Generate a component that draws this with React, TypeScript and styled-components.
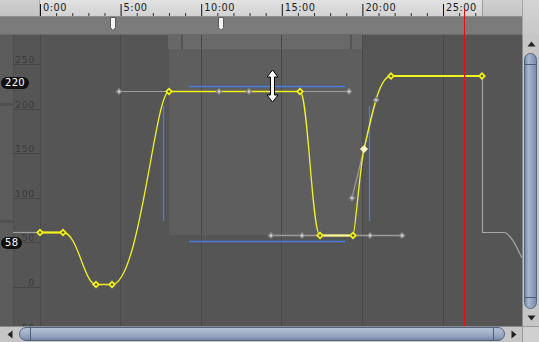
import React from "react";
import styled, { createGlobalStyle } from "styled-components";

const GlobalStyle = createGlobalStyle`
  html, body { margin: 0; padding: 0; background: #555555; overflow: hidden; }
  body { font-family: "DejaVu Sans", "Liberation Sans", sans-serif; }
`;

const Editor = styled.div`
  position: relative;
  width: 539px;
  height: 342px;
  display: grid;
  grid-template-columns: 522px 17px;
  grid-template-rows: 17px 18px 291px 16px;
  overflow: hidden;
  background: #555555;
`;

const RulerBar = styled.div`
  grid-column: 1;
  grid-row: 1;
  display: flex;
  border-bottom: 1px solid #8c8c8c;
  box-sizing: border-box;
`;

const RulerLead = styled.div`
  width: 40px;
  background: linear-gradient(#d0d0d0, #c2c2c2);
  border-right: 1px solid #a8a8a8;
  box-sizing: border-box;
`;

const RulerTrack = styled.svg`
  display: block;
  width: 442px;
  height: 16px;
  background: linear-gradient(#e2e2e2, #d2d2d2);
`;

const RulerTail = styled.div`
  flex: 1;
  background: linear-gradient(#d0d0d0, #c4c4c4);
  border-left: 1px solid #9c9c9c;
`;

const RightHeader = styled.div`
  grid-column: 2;
  grid-row: 1 / span 2;
  background: linear-gradient(#d4d4d4, #c8c8c8);
  border-left: 1px solid #a4a4a4;
`;

const EventStrip = styled.div`
  grid-column: 1;
  grid-row: 2;
  position: relative;
  background: #7b7b7b;
  border-bottom: 1px solid #6a6a6a;
  box-sizing: border-box;
`;

const EventMarker = styled.svg<{ $x: number }>`
  position: absolute;
  top: 0;
  left: ${(p) => p.$x}px;
  width: 6px;
  height: 14px;
`;

const GraphSvg = styled.svg`
  grid-column: 1;
  grid-row: 3;
  display: block;
  width: 522px;
  height: 291px;
`;

const VScroll = styled.div`
  grid-column: 2;
  grid-row: 3;
  display: flex;
  flex-direction: column;
  background: #c6c6c6;
  border-left: 1px solid #8a8a8a;
  box-sizing: border-box;
`;

const ArrowButton = styled.div<{ $h: number }>`
  height: ${(p) => p.$h}px;
  display: flex;
  align-items: center;
  justify-content: center;
  flex: none;
`;

const VTrack = styled.div`
  flex: 1;
  display: flex;
  padding: 0 2px 0 1px;
`;

const VThumb = styled.div`
  flex: 1;
  position: relative;
  border: 1px solid #53647f;
  border-radius: 7px;
  background: linear-gradient(90deg, #7487a6 0%, #a9b7cd 30%, #95a5c0 60%, #7a8cac 100%);
  &::before, &::after {
    content: "";
    position: absolute;
    left: 0;
    right: 0;
    height: 1px;
    background: #4d5d78;
  }
  &::before { top: 10px; }
  &::after { bottom: 10px; }
`;

const HScroll = styled.div`
  grid-column: 1;
  grid-row: 4;
  display: flex;
  background: #c6c6c6;
  border-top: 1px solid #8a8a8a;
  box-sizing: border-box;
`;

const HButton = styled.div<{ $w: number }>`
  width: ${(p) => p.$w}px;
  display: flex;
  align-items: center;
  justify-content: center;
  flex: none;
`;

const HTrack = styled.div`
  flex: 1;
  display: flex;
  padding: 0 0 1px 0;
`;

const HThumb = styled.div`
  flex: 1;
  position: relative;
  border: 1px solid #53647f;
  border-radius: 7px;
  background: linear-gradient(#b3c0d4 0%, #a4b2c9 40%, #8e9ebb 75%, #7385a5 100%);
  &::before, &::after {
    content: "";
    position: absolute;
    top: 0;
    bottom: 0;
    width: 1px;
    background: #4d5d78;
  }
  &::before { left: 10px; }
  &::after { right: 10px; }
`;

const Corner = styled.div`
  grid-column: 2;
  grid-row: 4;
  background: #d0d0d0;
  border-left: 1px solid #9a9a9a;
  border-top: 1px solid #9a9a9a;
`;

const Playhead = styled.div`
  position: absolute;
  left: 464px;
  top: 9px;
  width: 1px;
  height: 317px;
  background: #e41010;
  pointer-events: none;
`;

const ValueBadge = styled.div<{ $top: number }>`
  position: absolute;
  left: 1px;
  top: ${(p) => p.$top}px;
  height: 12px;
  padding: 0 4px;
  border-radius: 6px;
  background: #101010;
  color: #ffffff;
  font-family: "DejaVu Sans", sans-serif;
  font-size: 10px;
  line-height: 12px;
  letter-spacing: 0.3px;
`;

const CursorIcon = styled.svg`
  position: absolute;
  left: 265px;
  top: 69px;
  width: 15px;
  height: 34px;
  pointer-events: none;
`;

const T0 = 40.5;
const MAJOR = 80.6;
const majors = [0, 1, 2, 3, 4, 5].map((k) => ({ x: T0 + MAJOR * k, label: `${k * 5}:00` }));
const minors = Array.from({ length: 28 }, (_, i) => i)
  .filter((i) => i % 5 !== 0)
  .map((i) => T0 + (MAJOR / 5) * i);

const gridXs = [40.5, 120.5, 201.5, 281.5, 362.5, 443.5];
const valueLines = [
  { v: "250", y: 64.5 },
  { v: "200", y: 109.5 },
  { v: "150", y: 153.5 },
  { v: "100", y: 198.5 },
  { v: "50", y: 242.5 },
  { v: "0", y: 287.5 },
];

const YELLOW = "#f2f21e";
const HANDLE = "#9c9c9c";
const BLUE = "#4a7ce4";

function Key({ x, y, selected }: { x: number; y: number; selected?: boolean }) {
  return (
    <g>
      <polygon
        points={`${x},${y - 4} ${x + 4},${y} ${x},${y + 4} ${x - 4},${y}`}
        fill={selected ? "#ffffb0" : YELLOW}
      />
      <polygon
        points={`${x},${y - 1.6} ${x + 1.6},${y} ${x},${y + 1.6} ${x - 1.6},${y}`}
        fill={selected ? "#ffffff" : "#5a5a10"}
      />
    </g>
  );
}

function Handle({ x, y }: { x: number; y: number }) {
  return (
    <g>
      <polygon points={`${x},${y - 3.5} ${x + 3.5},${y} ${x},${y + 3.5} ${x - 3.5},${y}`} fill="#8a8a8a" />
      <polygon points={`${x},${y - 1.5} ${x + 1.5},${y} ${x},${y + 1.5} ${x - 1.5},${y}`} fill="#d8d8d8" />
    </g>
  );
}

export default function App() {
  return (
    <>
      <GlobalStyle />
      <Editor>
        <RulerBar>
          <RulerLead />
          <RulerTrack viewBox="40 0 442 16">
            {minors.map((x) => (
              <line key={x} x1={x} x2={x} y1={13} y2={16} stroke="#333" strokeWidth={1} />
            ))}
            {majors.map((m) => (
              <g key={m.label}>
                <line x1={m.x} x2={m.x} y1={4} y2={16} stroke="#111" strokeWidth={1} />
                <text
                  x={m.x + 2.5}
                  y={11}
                  fontFamily="DejaVu Sans, sans-serif"
                  fontSize={9.8}
                  letterSpacing={0.5}
                  fill="#1a1a1a"
                >
                  {m.label}
                </text>
              </g>
            ))}
          </RulerTrack>
          <RulerTail />
        </RulerBar>
        <RightHeader />
        <EventStrip>
          {[110, 218].map((x) => (
            <EventMarker key={x} $x={x} viewBox="0 0 6 14">
              <path d="M0.5,0.5 H5.5 V10.5 L3,13.5 L0.5,10.5 Z" fill="#f4f4f4" stroke="#5a5a5a" strokeWidth={1} />
            </EventMarker>
          ))}
        </EventStrip>

        <GraphSvg viewBox="0 35 522 291">
          <rect x={0} y={35} width={522} height={291} fill="#555555" />
          {/* left value range bar */}
          <rect x={0} y={35} width={13} height={291} fill="#5c5c5c" />
          <rect x={0} y={103} width={13} height={3} fill="#515151" />
          <rect x={0} y={220} width={13} height={3} fill="#515151" />
          {/* selection rect */}
          <rect x={169} y={49} width={194} height={186} fill="#5e5e5e" />
          {/* top time range bar */}
          <rect x={168} y={35} width={13} height={14} fill="#676767" />
          <rect x={183} y={35} width={167} height={14} fill="#696969" />
          <rect x={352} y={35} width={11} height={14} fill="#676767" />

          {gridXs.map((x) => (
            <line key={x} x1={x} x2={x} y1={35} y2={326} stroke="#4a4a4a" strokeWidth={1} />
          ))}
          <line x1={13.5} x2={13.5} y1={35} y2={326} stroke="#4f4f4f" strokeWidth={1} />
          {valueLines.map((l) => (
            <g key={l.v}>
              <line x1={13} x2={40} y1={l.y} y2={l.y} stroke="#474747" strokeWidth={1} />
              <text
                x={35}
                y={l.y - 1.5}
                textAnchor="end"
                fontFamily="DejaVu Sans, sans-serif"
                fontSize={9.5}
                letterSpacing={0.6}
                fill="#3c3c3c"
              >
                {l.v}
              </text>
            </g>
          ))}
          <line x1={13} x2={40} y1={331.5} y2={331.5} stroke="#474747" strokeWidth={1} />
          <text
            x={35}
            y={331}
            textAnchor="end"
            fontFamily="DejaVu Sans, sans-serif"
            fontSize={9.5}
            letterSpacing={0.6}
            fill="#3c3c3c"
          >
            -50
          </text>

          {/* blue scale bars */}
          <line x1={189} x2={345} y1={86.5} y2={86.5} stroke={BLUE} strokeWidth={1.3} />
          <line x1={189} x2={345} y1={241.5} y2={241.5} stroke={BLUE} strokeWidth={1.3} />
          <line x1={163.5} x2={163.5} y1={106} y2={221} stroke={BLUE} strokeWidth={1.3} />
          <line x1={369.5} x2={369.5} y1={106} y2={221} stroke={BLUE} strokeWidth={1.3} />

          {/* wrap extensions */}
          <line x1={13} x2={40} y1={232.5} y2={232.5} stroke="#a0a0a0" strokeWidth={1.2} />
          <path d="M482.5,76 V232.5 H505 C512,236 517,248 522,258" fill="none" stroke="#a6a6a6" strokeWidth={1.2} />

          {/* tangent handle lines */}
          <line x1={119} x2={349} y1={91.5} y2={91.5} stroke={HANDLE} strokeWidth={1.2} />
          <line x1={271} x2={402} y1={235.5} y2={235.5} stroke={HANDLE} strokeWidth={1.4} />
          <line x1={352} x2={376} y1={198} y2={100} stroke={HANDLE} strokeWidth={1.2} />

          {/* curve */}
          <path
            d="M40,232.5 H63 C78,232.5 84,284.5 96,284.5 H112 C140,284.5 155,91.5 169,91.5 H300 C308,91.5 312,235.5 320,235.5 H353 C355,235.5 360,166 364,149 C370,124.5 378,76 391,76"
            fill="none"
            stroke={YELLOW}
            strokeWidth={1.3}
          />
          <line x1={40} x2={63} y1={232.5} y2={232.5} stroke={YELLOW} strokeWidth={2} />
          <line x1={320} x2={353} y1={235.5} y2={235.5} stroke="#f6f6a0" strokeWidth={2} />
          <line x1={391} x2={482} y1={76} y2={76} stroke={YELLOW} strokeWidth={2} />

          {[
            [119, 91.5], [219, 91.5], [249, 91.5], [349, 91.5],
            [271, 235.5], [302, 235.5], [370, 235.5], [402, 235.5],
            [352, 198], [376, 100],
          ].map(([x, y]) => (
            <Handle key={`${x}-${y}`} x={x} y={y} />
          ))}

          <Key x={40} y={232.5} />
          <Key x={63} y={232.5} />
          <Key x={96} y={284.5} />
          <Key x={112} y={284.5} />
          <Key x={169} y={91.5} />
          <Key x={300} y={91.5} />
          <Key x={320} y={235.5} />
          <Key x={353} y={235.5} />
          <Key x={364} y={149} selected />
          <Key x={391} y={76} />
          <Key x={482} y={76} />
        </GraphSvg>

        <VScroll>
          <ArrowButton $h={18}>
            <svg width="9" height="6" viewBox="0 0 9 6">
              <path d="M4.5,0.5 L8.5,5.5 H0.5 Z" fill="#222" />
            </svg>
          </ArrowButton>
          <VTrack>
            <VThumb />
          </VTrack>
          <ArrowButton $h={17}>
            <svg width="9" height="6" viewBox="0 0 9 6">
              <path d="M0.5,0.5 H8.5 L4.5,5.5 Z" fill="#222" />
            </svg>
          </ArrowButton>
        </VScroll>

        <HScroll>
          <HButton $w={19}>
            <svg width="6" height="9" viewBox="0 0 6 9">
              <path d="M0.5,4.5 L5.5,0.5 V8.5 Z" fill="#222" />
            </svg>
          </HButton>
          <HTrack>
            <HThumb />
          </HTrack>
          <HButton $w={17}>
            <svg width="6" height="9" viewBox="0 0 6 9">
              <path d="M5.5,4.5 L0.5,0.5 V8.5 Z" fill="#222" />
            </svg>
          </HButton>
        </HScroll>
        <Corner />

        <Playhead />
        <ValueBadge $top={77}>220</ValueBadge>
        <ValueBadge $top={237}>58</ValueBadge>
        <CursorIcon viewBox="0 0 15 34">
          <path
            d="M7.5,1 L13,8 H9.5 V26 H13 L7.5,33 L2,26 H5.5 V8 H2 Z"
            fill="#ffffff"
            stroke="#000000"
            strokeWidth={1}
            strokeLinejoin="round"
          />
        </CursorIcon>
      </Editor>
    </>
  );
}
